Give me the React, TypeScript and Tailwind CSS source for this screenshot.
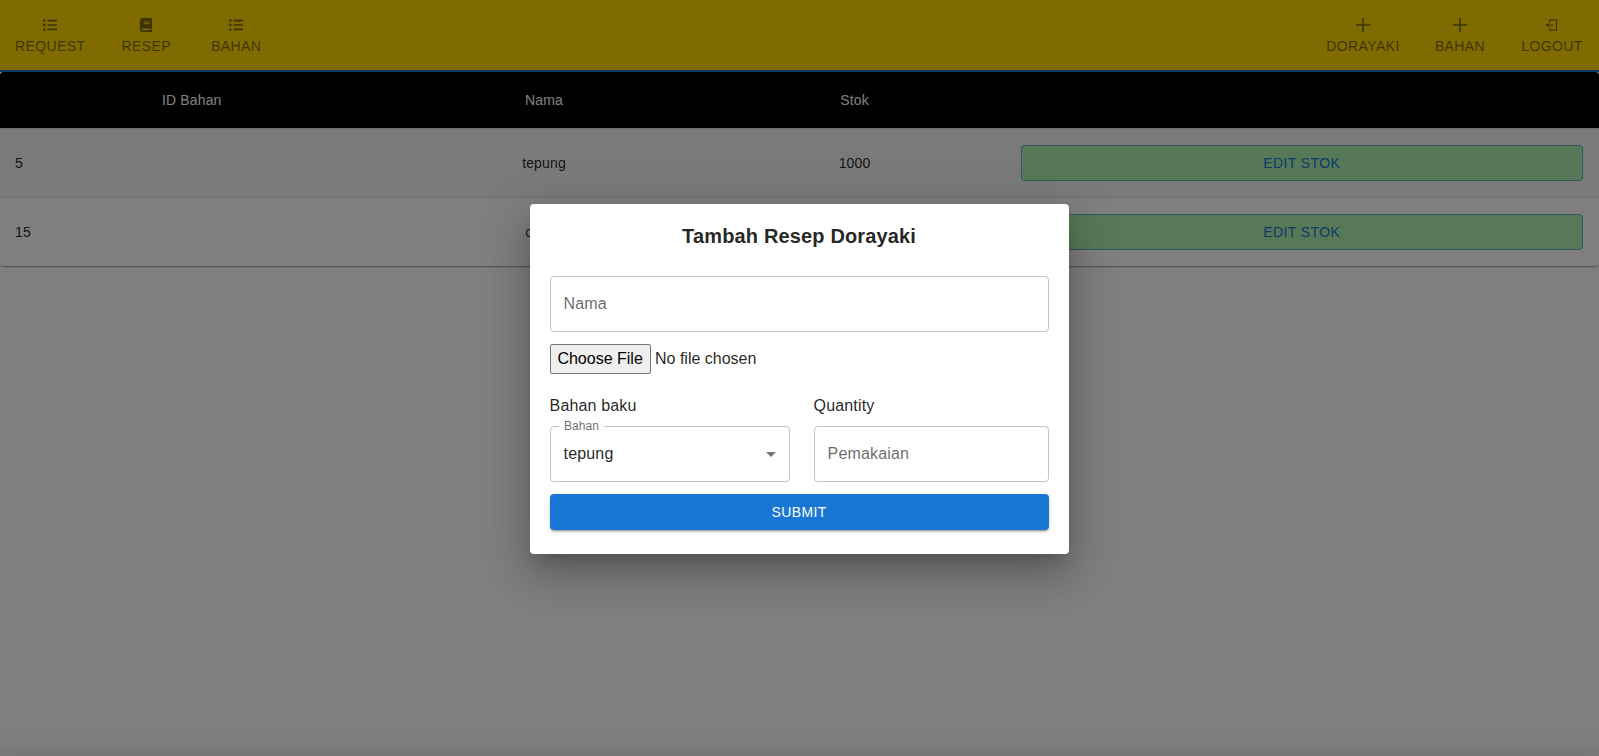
import type { ReactNode } from 'react';

function Tab({ icon, label, className }: { icon: ReactNode; label: string; className: string }) {
  return (
    <button className={`flex h-[70px] flex-col items-center justify-center pt-1 text-sm leading-[17.5px] tracking-[0.4px] text-black/52 ${className}`}>
      <span className="mb-1.5 flex h-3.5 items-center">{icon}</span>
      {label}
    </button>
  );
}

function ListIcon() {
  return (
    <svg viewBox="0 0 14 14" width="14" height="14" fill="currentColor">
      <circle cx="1.3" cy="2.5" r="1.3" />
      <circle cx="1.3" cy="7" r="1.3" />
      <circle cx="1.3" cy="11.5" r="1.3" />
      <rect x="4.5" y="1.7" width="9.5" height="1.7" rx="0.4" />
      <rect x="4.5" y="6.15" width="9.5" height="1.7" rx="0.4" />
      <rect x="4.5" y="10.6" width="9.5" height="1.7" rx="0.4" />
    </svg>
  );
}

function BookIcon() {
  return (
    <svg viewBox="0 0 448 512" width="12.25" height="14" fill="currentColor" fillRule="evenodd">
      <path d="M96 0h304c26 0 48 22 48 48v288c0 20-12 38-32 44v68c18 0 32 14 32 32s-14 32-32 32H96c-53 0-96-43-96-96V96C0 43 43 0 96 0zM64 416c0 18 14 32 32 32h256v-64H96c-18 0-32 14-32 32zM144 128c-9 0-16 7-16 16s7 16 16 16h192c9 0 16-7 16-16s-7-16-16-16H144zM144 192c-9 0-16 7-16 16s7 16 16 16h192c9 0 16-7 16-16s-7-16-16-16H144z" />
    </svg>
  );
}

function PlusIcon() {
  return (
    <svg viewBox="0 0 14 14" width="14" height="14" fill="none" stroke="currentColor" strokeWidth="1.6">
      <path d="M7 0v14M0 7h14" />
    </svg>
  );
}

function ExitIcon() {
  return (
    <svg viewBox="0 0 14 14" width="14" height="14" fill="none" stroke="currentColor" strokeWidth="1.2">
      <path d="M4.700 4.700V2.300q0-.500.500-.500H11q.500 0 .500.500v9.400q0 .500-.500.500H5.200q-.500 0-.500-.500V9.300M3 7H8.300" />
      <path d="M.5 7L3.300 4.900v4.200z" fill="currentColor" stroke="none" />
    </svg>
  );
}

const rows = [
  { id: '5', nama: 'tepung', stok: '1000', look: 'h-[69px] border-b border-[#e0e0e0] bg-[#f5f5f5]' },
  { id: '15', nama: 'coklat', stok: '', look: 'h-[68px] bg-white' },
];

const columns = 'grid grid-cols-[383.5px_321px_300px_594.5px]';

export default function App() {
  return (
    <div className="relative h-[756px] overflow-hidden bg-white font-['Liberation_Sans',sans-serif] text-black/87">
      <header className="flex h-[72px] justify-between border-b-2 border-[#1976d2] bg-[#ffd700]">
        <div className="flex">
          <Tab icon={<ListIcon />} label="REQUEST" className="w-[100.5px]" />
          <Tab icon={<BookIcon />} label="RESEP" className="w-[91.5px]" />
          <Tab icon={<ListIcon />} label="BAHAN" className="w-[88.5px]" />
        </div>
        <div className="flex">
          <Tab icon={<PlusIcon />} label="DORAYAKI" className="w-[104px]" />
          <Tab icon={<PlusIcon />} label="BAHAN" className="w-[90px]" />
          <Tab icon={<ExitIcon />} label="LOGOUT" className="w-[94px]" />
        </div>
      </header>

      <main className="overflow-hidden rounded text-sm tracking-[0.15px] shadow-[0px_2px_1px_-1px_rgba(0,0,0,0.2),0px_1px_1px_0px_rgba(0,0,0,0.14),0px_1px_3px_0px_rgba(0,0,0,0.12)]">
        <div className={`${columns} h-[57px] items-center border-b border-[#e0e0e0] bg-black text-center text-white`}>
          <span>ID Bahan</span>
          <span>Nama</span>
          <span>Stok</span>
        </div>
        {rows.map((r) => (
          <div key={r.id} className={`${columns} items-center text-center ${r.look}`}>
            <span className="pl-[15px] text-left">{r.id}</span>
            <span>{r.nama}</span>
            <span>{r.stok}</span>
            <span className="px-4">
              <button className="h-9 w-full rounded border border-[#1976d2]/50 bg-[#90ee90]/70 tracking-[0.4px] text-[#1976d2]">EDIT STOK</button>
            </span>
          </div>
        ))}
      </main>

      <div className="absolute inset-0 flex items-center justify-center bg-black/50">
        <form className="mr-[0.8px] mt-0.5 flex w-[539px] flex-col rounded bg-white px-5 pb-6 pt-4 shadow-[0px_11px_15px_-7px_rgba(0,0,0,0.2),0px_24px_38px_3px_rgba(0,0,0,0.14),0px_9px_46px_8px_rgba(0,0,0,0.12)]">
          <h2 className="text-center text-xl font-bold leading-8 tracking-[0.15px]">Tambah Resep Dorayaki</h2>
          <input placeholder="Nama" className="mt-6 h-14 w-full rounded border border-black/23 px-[13px] tracking-[0.15px] placeholder:text-black/60" />
          <div className="mt-3 flex items-center">
            <button type="button" className="h-[30px] w-[101px] rounded-[2px] border border-[#767676] bg-[#efefef] text-black">Choose File</button>
            <span className="ml-[4.4px]">No file chosen</span>
          </div>
          <div className="mt-5 grid grid-cols-[240px_235px] gap-6 tracking-[0.15px]">
            <div>
              <div className="h-8 leading-6">Bahan baku</div>
              <div className="relative flex h-14 items-center justify-between rounded border border-black/23 px-[13px]">
                <span className="absolute -top-[9px] left-2 bg-white px-[5.3px] text-xs leading-4 tracking-[0.1px] text-black/60">Bahan</span>
                <span>tepung</span>
                <svg width="24" height="24" viewBox="0 0 24 24" className="-mr-[7px] text-black/54" fill="currentColor"><path d="M7 10l5 5 5-5z" /></svg>
              </div>
            </div>
            <div>
              <div className="h-8 leading-6">Quantity</div>
              <input placeholder="Pemakaian" className="h-14 w-full rounded border border-black/23 px-[13px] tracking-[0.15px] placeholder:text-black/60" />
            </div>
          </div>
          <button type="button" className="mt-3 h-9 rounded bg-[#1976d2] text-sm tracking-[0.4px] text-white shadow-[0px_3px_1px_-2px_rgba(0,0,0,0.2),0px_2px_2px_0px_rgba(0,0,0,0.14),0px_1px_5px_0px_rgba(0,0,0,0.12)]">SUBMIT</button>
        </form>
      </div>
      <div className="absolute left-0 top-full h-10 w-full shadow-[0px_8px_10px_-5px_rgba(0,0,0,0.2),0px_16px_24px_2px_rgba(0,0,0,0.14),0px_6px_30px_5px_rgba(0,0,0,0.12)]" />
    </div>
  );
}
